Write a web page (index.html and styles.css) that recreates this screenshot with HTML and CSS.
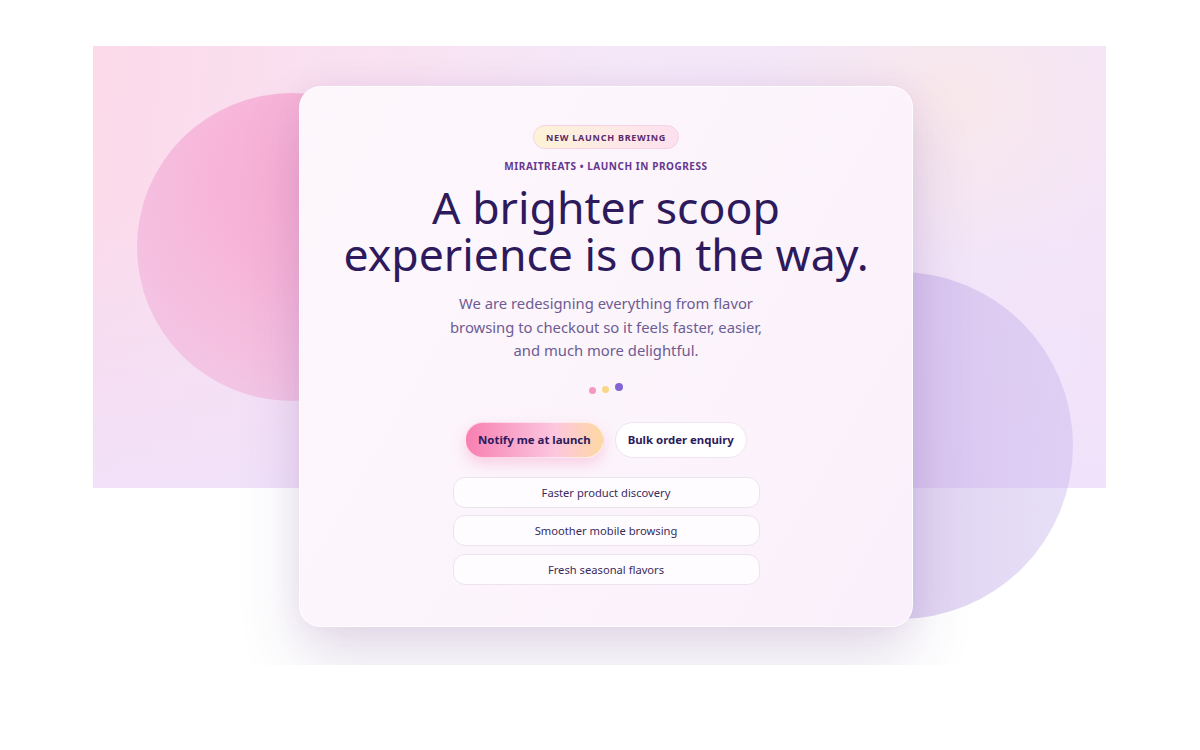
FILE: index.html
```html
<!DOCTYPE html>
<html lang="en">
<head>
<meta charset="utf-8">
<title>MiraiTreats — Launch in progress</title>
<link rel="stylesheet" href="styles.css">
</head>
<body>
<main class="stage">
  <div class="panel"></div>
  <div class="blob blob-pink"></div>
  <div class="blob blob-purple"></div>

  <section class="card">
    <span class="badge">NEW LAUNCH BREWING</span>
    <p class="eyebrow">MIRAITREATS • LAUNCH IN PROGRESS</p>
    <h1 class="title"><span class="title-line">A brighter scoop</span><span class="title-line">experience is on the way.</span></h1>
    <p class="lead">We are redesigning everything from flavor browsing to checkout so it feels faster, easier, and much more delightful.</p>
    <div class="dots">
      <span class="dot dot-pink"></span>
      <span class="dot dot-yellow"></span>
      <span class="dot dot-purple"></span>
    </div>
    <div class="actions">
      <button class="btn btn-primary">Notify me at launch</button>
      <button class="btn btn-ghost">Bulk order enquiry</button>
    </div>
    <ul class="features">
      <li class="feature">Faster product discovery</li>
      <li class="feature">Smoother mobile browsing</li>
      <li class="feature">Fresh seasonal flavors</li>
    </ul>
  </section>
</main>
</body>
</html>
```
FILE: styles.css
```css
* { box-sizing: border-box; }
html, body { margin: 0; padding: 0; background: #ffffff; }
body { font-family: "Noto Sans", "Open Sans", sans-serif; color: #2e1a5e; }

.stage {
  position: relative;
  height: 665px;
  overflow: hidden;
  display: flex;
  justify-content: center;
  align-items: flex-start;
  padding: 86px 0 0 12px;
}

.panel {
  position: absolute;
  left: 93px;
  top: 46px;
  width: 1013px;
  height: 442px;
  background:
    radial-gradient(ellipse 200px 160px at 85% 12%, rgba(250, 232, 228, 0.7), rgba(250, 232, 228, 0) 100%),
    linear-gradient(180deg, rgba(240, 226, 251, 0) 35%, rgba(240, 226, 251, 0.85) 100%),
    linear-gradient(95deg, #fcdaea 0%, #f9e1f1 25%, #f4e7f8 50%, #f3e6f8 75%, #f4e4f8 100%);
}

.blob {
  position: absolute;
  border-radius: 50%;
}
.blob-pink {
  left: 137px;
  top: 93px;
  width: 310px;
  height: 308px;
  background: radial-gradient(circle at 55% 30%, #f8afd5 0%, #f7b5d9 35%, #f4c2e2 70%, #efcdec 100%);
  filter: blur(0.6px);
}
.blob-purple {
  left: 726px;
  top: 272px;
  width: 347px;
  height: 347px;
  background: linear-gradient(90deg, rgba(176, 142, 222, 0.6) 0%, rgba(190, 162, 228, 0.48) 45%, rgba(200, 182, 236, 0.44) 100%);
}

.card {
  position: relative;
  width: 614px;
  height: 541px;
  padding: 38px 40px 0;
  border-radius: 22px;
  background: linear-gradient(120deg, #fdf7fc 0%, #fcf4fb 55%, #faf0fb 100%);
  border: 1px solid rgba(255, 255, 255, 0.9);
  box-shadow: 0 30px 60px rgba(90, 50, 125, 0.17), 0 0 24px rgba(150, 90, 180, 0.08);
  display: flex;
  flex-direction: column;
  align-items: center;
  text-align: center;
}

.badge {
  display: inline-flex;
  align-items: center;
  height: 24px;
  padding: 0 12px;
  border-radius: 999px;
  border: 1px solid #f5d2e4;
  background: linear-gradient(90deg, #fdf3d6 0%, #fde9e6 55%, #fde0ef 100%);
  font-size: 9px;
  font-weight: 700;
  letter-spacing: 0.75px;
  color: #5a2a6c;
}

.eyebrow {
  margin: 10px 0 0;
  font-size: 10px;
  line-height: 14px;
  font-weight: 700;
  letter-spacing: 0.55px;
  color: #65378e;
}

.title {
  margin: 10px 0 0;
  font-size: 44.6px;
  line-height: 47px;
  font-weight: 400;
  color: #2d1a5c;
}
.title-line { display: block; height: 47px; }

.lead {
  margin: 15px 0 0;
  width: 322px;
  font-size: 14.8px;
  line-height: 23.5px;
  color: #6c5c93;
}

.dots {
  margin-top: 21px;
  display: flex;
  align-items: center;
  gap: 6px;
  height: 10px;
}
.dot {
  width: 7px;
  height: 7px;
  border-radius: 50%;
}
.dot-pink { background: #f596c3; margin-top: 3px; }
.dot-yellow { background: #f7d785; margin-top: 1px; }
.dot-purple { background: #8465d6; width: 8px; height: 8px; margin-top: -3px; }

.actions {
  margin-top: 28px;
  display: flex;
  gap: 11px;
}
.btn {
  height: 36px;
  padding: 0 12px;
  border-radius: 999px;
  font-family: inherit;
  font-size: 11.4px;
  font-weight: 700;
  white-space: nowrap;
  color: #2d1a5c;
  cursor: pointer;
}
.btn-primary {
  border: 1px solid rgba(255, 255, 255, 0.6);
  background: linear-gradient(90deg, #f77fb1 0%, #f9a6cb 35%, #fcc7df 65%, #fdd8a2 100%);
  box-shadow: 0 6px 14px rgba(240, 110, 170, 0.28);
}
.btn-ghost {
  border: 1px solid #eee4f1;
  background: #ffffff;
}

.features {
  list-style: none;
  margin: 19px 0 0;
  padding: 0;
  width: 307px;
  display: flex;
  flex-direction: column;
  gap: 7.5px;
}
.feature {
  height: 31px;
  display: flex;
  align-items: center;
  justify-content: center;
  border: 1px solid #ece3ef;
  border-radius: 12px;
  background: rgba(255, 255, 255, 0.75);
  font-size: 11.2px;
  color: #3a2b5e;
}
```
